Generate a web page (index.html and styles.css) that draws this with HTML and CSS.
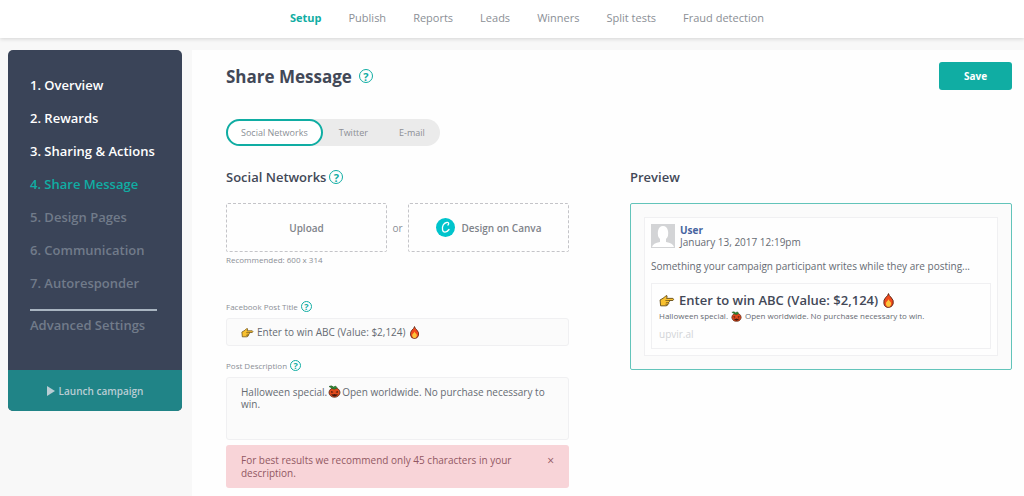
FILE: index.html
```
<!DOCTYPE html>
<html lang="en">
<head>
    <meta charset="UTF-8">
    <meta name="viewport" content="width=device-width, initial-scale=1">
    <title>Share Message</title>
    <link rel="stylesheet" href="styles.css">
</head>
<body>
    <!-- shared icons -->
    <svg class="sprite" aria-hidden="true">
        <symbol id="hand" viewBox="0 0 30 24">
            <path d="M2 11 L9 7 L13 3 Q16 2 15 6 L14 8 H26 Q29 9 26 12 H19 Q21 14 18 16 Q19 18 17 19 Q16 22 13 22 H3 Z" fill="#f9c12f" stroke="#5b4211" stroke-width="1.6" stroke-linejoin="round"/>
            <path d="M12 12 H19 M13 16 H18 M12 19 H17" fill="none" stroke="#5b4211" stroke-width="1.2"/>
        </symbol>
        <symbol id="fire" viewBox="0 0 22 26">
            <path d="M11 1 Q12 5 15 7 Q21 13 19 19 Q17 25 11 25 Q4 25 3 18 Q2 12 6 8 Q10 5 11 1 Z" fill="#f04a1d" stroke="#5a2414" stroke-width="1.6"/>
            <path d="M11 11 Q12 14 15 16 Q17 20 14 23 Q11 25 8 23 Q5 20 7 16 Q10 14 11 11 Z" fill="#fdc43a"/>
        </symbol>
        <symbol id="pumpkin" viewBox="0 0 26 26">
            <ellipse cx="13" cy="15" rx="11" ry="9.5" fill="#e14a1b" stroke="#4f2413" stroke-width="1.6"/>
            <path d="M2 3 Q7 0 11 4 L15 2 L18 5 L15 8 Q9 9 7 6 Z" fill="#2f8a35" stroke="#234f20"/>
            <path d="M6 12 L11 14 L7 16 Z M20 12 L15 14 L19 16 Z M6 18 L10 19 L13 18 L16 19 L20 18 Q17 23 13 23 Q9 23 6 18 Z" fill="#43180d"/>
        </symbol>
    </svg>

    <header class="topbar">
        <nav class="topnav">
            <a href="#" class="active">Setup</a>
            <a href="#">Publish</a>
            <a href="#">Reports</a>
            <a href="#">Leads</a>
            <a href="#">Winners</a>
            <a href="#">Split tests</a>
            <a href="#">Fraud detection</a>
        </nav>
    </header>

    <div class="layout">
        <aside class="sidebar">
            <nav class="steps">
                <a href="#" class="done">1. Overview</a>
                <a href="#" class="done">2. Rewards</a>
                <a href="#" class="done">3. Sharing &amp; Actions</a>
                <a href="#" class="current">4. Share Message</a>
                <a href="#">5. Design Pages</a>
                <a href="#">6. Communication</a>
                <a href="#">7. Autoresponder</a>
                <a href="#" class="advanced">Advanced Settings</a>
            </nav>
            <button type="button" class="launch">
                <svg width="8" height="10" viewBox="0 0 8 10"><path d="M0 0 L8 5 L0 10 Z" fill="currentColor"/></svg>
                Launch campaign
            </button>
        </aside>

        <main class="content">
            <div class="title-row">
                <h1>Share Message</h1>
                <button type="button" class="help help-title" aria-label="Help on share message">?</button>
                <button type="button" class="save">Save</button>
            </div>

            <div class="tabs">
                <button type="button" class="tab selected">Social Networks</button>
                <button type="button" class="tab">Twitter</button>
                <button type="button" class="tab">E-mail</button>
            </div>

            <div class="columns">
                <section>
                    <div class="section-head">
                        <h2>Social Networks</h2>
                        <button type="button" class="help help-section" aria-label="Help on social networks">?</button>
                    </div>

                    <div class="image-row">
                        <button type="button" class="drop">Upload</button>
                        <span class="or">or</span>
                        <button type="button" class="drop">
                            <svg width="19" height="19" viewBox="0 0 38 38">
                                <circle cx="19" cy="19" r="19" fill="#00c4cc"/>
                                <path d="M24 14 C27 11 25 8 21 9 C15 10 12 17 13 23 C14 30 21 30 26 23" fill="none" stroke="#fff" stroke-width="2.6" stroke-linecap="round"/>
                            </svg>
                            Design on Canva
                        </button>
                    </div>
                    <p class="hint">Recommended: 600 x 314</p>

                    <div class="label-row">
                        <label for="post-title">Facebook Post Title</label>
                        <button type="button" class="help" aria-label="Help on post title">?</button>
                    </div>
                    <div class="field">
                        <svg class="emoji" width="13" height="11"><use href="#hand"/></svg>
                        <input id="post-title" type="text" value="Enter to win ABC (Value: $2,124)">
                        <svg class="emoji" width="11" height="13"><use href="#fire"/></svg>
                    </div>

                    <div class="label-row">
                        <label for="post-text">Post Description</label>
                        <button type="button" class="help" aria-label="Help on post description">?</button>
                    </div>
                    <div class="text-field">
                        <textarea id="post-text">Halloween special.&emsp;&ensp;Open worldwide. No purchase necessary to win.</textarea>
                        <svg class="text-emoji" width="13" height="13"><use href="#pumpkin"/></svg>
                    </div>

                    <div class="alert" role="alert">
                        <p>For best results we recommend only 45 characters in your description.</p>
                        <button type="button" class="close" aria-label="Close">×</button>
                    </div>
                </section>

                <section>
                    <div class="section-head">
                        <h2>Preview</h2>
                    </div>
                    <div class="preview">
                        <article class="post">
                            <div class="author">
                                <svg width="24" height="24" viewBox="0 0 24 24">
                                    <rect width="24" height="24" fill="#d3d4d6"/>
                                    <path d="M1 23 Q2 19 9 18 V15 Q6 12 7 7 Q8 2 12 2 Q16 2 17 7 Q18 12 15 15 V18 Q22 19 23 23 Z" fill="#fff"/>
                                </svg>
                                <div>
                                    <a href="#" class="user">User</a>
                                    <time>January 13, 2017 12:19pm</time>
                                </div>
                            </div>
                            <p class="message">Something your campaign participant writes while they are posting...</p>
                            <div class="card">
                                <h3>
                                    <svg width="16" height="13"><use href="#hand"/></svg>
                                    Enter to win ABC (Value: $2,124)
                                    <svg width="13" height="15"><use href="#fire"/></svg>
                                </h3>
                                <p class="card-text">
                                    Halloween special.
                                    <svg width="11" height="11"><use href="#pumpkin"/></svg>
                                    Open worldwide. No purchase necessary to win.
                                </p>
                                <p class="domain">upvir.al</p>
                            </div>
                        </article>
                    </div>
                </section>
            </div>
        </main>
    </div>
</body>
</html>
```
FILE: styles.css
```
:root {
    --teal: #10ada3;
    --navy: #3a4458;
    --heading: #424857;
    --grey: #8b8f96;
    --line: #f0f0f2;
}

* {
    box-sizing: border-box;
}

body {
    margin: 0;
    background: #f8f8f8;
    color: #666b73;
    font-family: "Open Sans", "Noto Sans", sans-serif;
    font-size: 10px;
    overflow: hidden;
}

h1, h2, h3, p {
    margin: 0;
}

a {
    color: inherit;
    text-decoration: none;
}

button, input, textarea {
    margin: 0;
    padding: 0;
    border: 0;
    background: none;
    color: inherit;
    font: inherit;
}

button {
    cursor: pointer;
}

.sprite {
    display: none;
}

/* top navigation */
.topbar {
    height: 38px;
    background: #fff;
    box-shadow: 0 1px 4px rgba(0, 0, 0, 0.15);
}

.topnav {
    display: flex;
    justify-content: center;
    gap: 27px;
    padding-left: 30px;
    color: var(--grey);
    font-size: 11px;
    line-height: 35px;
}

.topnav .active {
    color: var(--teal);
    font-weight: 700;
}

.layout {
    display: grid;
    grid-template-columns: 174px 1fr;
    gap: 10px;
    align-items: start;
    padding: 12px 0 0 8px;
}

/* sidebar */
.sidebar {
    border-radius: 5px;
    background: var(--navy);
    overflow: hidden;
}

.steps {
    display: flex;
    flex-direction: column;
    gap: 15px;
    padding: 26px 25px 36px 22px;
    color: #717b8a;
    font-size: 13px;
    font-weight: 600;
    line-height: 18px;
}

.steps .done {
    color: #fff;
}

.steps .current {
    color: var(--teal);
}

.steps .advanced {
    margin-top: 2px;
    padding-top: 5px;
    border-top: 2px solid #a9b5c1;
}

.launch {
    display: flex;
    align-items: center;
    justify-content: center;
    gap: 4px;
    width: 100%;
    height: 41px;
    background: #208487;
    color: #b9cdd4;
    font-weight: 600;
}

/* main panel */
.content {
    min-height: 460px;
    padding: 12px 12px 12px 34px;
    background: #fefefe;
}

.title-row {
    display: flex;
    align-items: center;
    height: 28px;
}

h1 {
    color: var(--heading);
    font-size: 17px;
    font-weight: 700;
}

.help {
    display: inline-flex;
    align-items: center;
    justify-content: center;
    width: 11px;
    height: 11px;
    border: 1px solid var(--teal);
    border-radius: 50%;
    color: var(--teal);
    font-size: 9px;
    font-weight: 700;
    line-height: 9px;
}

.help-section,
.help-title {
    width: 14px;
    height: 14px;
    font-size: 11px;
}

.help-title {
    margin-left: 7px;
}

.save {
    width: 73px;
    height: 28px;
    margin-left: auto;
    border-radius: 3px;
    background: var(--teal);
    color: #fff;
    font-weight: 700;
}

.tabs {
    display: inline-flex;
    gap: 1px;
    height: 27px;
    margin-top: 29px;
    border-radius: 14px;
    background: #ebebeb;
    color: var(--grey);
    font-size: 9px;
}

.tab {
    padding: 0 15px;
}

.tab.selected {
    border: 2px solid var(--teal);
    border-radius: 14px;
    background: #fff;
    padding: 0 13px;
}

.columns {
    display: grid;
    grid-template-columns: 343fr 382fr;
    gap: 61px;
    margin-top: 21px;
}

.section-head {
    display: flex;
    align-items: center;
    gap: 3px;
    height: 20px;
}

h2 {
    color: var(--heading);
    font-size: 13px;
    font-weight: 600;
}

/* image picker */
.image-row {
    display: flex;
    align-items: center;
    margin-top: 16px;
}

.drop {
    display: flex;
    flex: 1;
    align-items: center;
    justify-content: center;
    gap: 7px;
    height: 49px;
    border: 1px dashed #c4c4c8;
    border-radius: 2px;
    color: #7f838a;
    font-weight: 600;
}

.or {
    width: 21px;
    text-align: center;
    color: var(--grey);
}

.hint {
    margin-top: 1px;
    color: var(--grey);
    font-size: 8px;
    line-height: 14px;
}

/* form */
.label-row {
    display: flex;
    align-items: center;
    gap: 3px;
    height: 14px;
    color: var(--grey);
    font-size: 8px;
}

.hint + .label-row {
    margin-top: 32px;
}

.field {
    display: flex;
    align-items: center;
    gap: 3px;
    height: 28px;
    margin: 5px 0 12px;
    padding: 0 14px;
    border: 1px solid var(--line);
    border-radius: 3px;
    background: #fbfbfb;
}

.field input {
    field-sizing: content;
}

.text-field {
    position: relative;
    margin-top: 5px;
}

.text-field textarea {
    display: block;
    width: 100%;
    height: 63px;
    padding: 8px 14px;
    border: 1px solid var(--line);
    border-radius: 3px;
    background: #fbfbfb;
    line-height: 12px;
    resize: none;
}

/* sits in the gap left in the text */
.text-emoji {
    position: absolute;
    top: 8px;
    left: 102px;
}

.alert {
    display: flex;
    align-items: flex-start;
    justify-content: space-between;
    gap: 20px;
    margin-top: 5px;
    padding: 9px 15px 8px;
    border-radius: 3px;
    background: #f8d4d8;
    color: #925863;
    line-height: 13px;
}

.close {
    font-size: 12px;
    line-height: 13px;
}

/* preview */
.preview {
    margin-top: 16px;
    padding: 13px;
    border: 1px solid #62c4ba;
    border-radius: 2px;
    background: #fbfbfb;
}

.post {
    padding: 6px;
    border: 1px solid var(--line);
    background: #fefefe;
}

.author {
    display: flex;
    gap: 5px;
    line-height: 12px;
}

.author time,
.user {
    display: block;
}

.user {
    color: #4664a0;
    font-weight: 700;
}

.message {
    margin: 11px 0 10px;
    line-height: 14px;
}

.card {
    padding: 8px 7px 7px;
    border: 1px solid var(--line);
}

.card h3 {
    display: flex;
    align-items: center;
    gap: 4px;
    height: 16px;
    color: var(--heading);
    font-size: 13px;
    font-weight: 600;
}

.card-text {
    display: flex;
    align-items: center;
    gap: 3px;
    font-size: 8px;
    line-height: 16px;
}

.domain {
    margin-top: 3px;
    color: #d2d4d7;
    font-size: 10px;
    line-height: 14px;
}
```
